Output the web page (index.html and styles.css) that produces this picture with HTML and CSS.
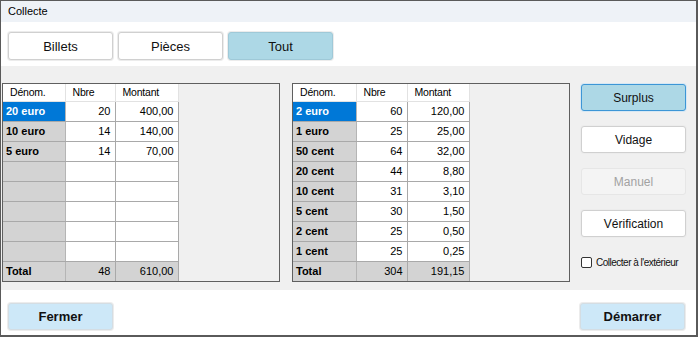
FILE: index.html
```html
<!DOCTYPE html>
<html lang="fr">
<head>
    <meta charset="UTF-8">
    <meta name="viewport" content="width=device-width, initial-scale=1.0">
    <title>Collecte</title>
    <link rel="stylesheet" href="styles.css">
</head>
<body>
    <div class="window">
        <div class="titlebar">Collecte</div>

        <div class="filtres">
            <button class="btn">Billets</button>
            <button class="btn">Pièces</button>
            <button class="btn actif">Tout</button>
        </div>

        <div class="main">
            <div class="grille">
                <table class="tab tab-billets">
                    <thead>
                        <tr><th>Dénom.</th><th>Nbre</th><th>Montant</th></tr>
                    </thead>
                    <tbody>
                        <tr class="sel"><td>20 euro</td><td>20</td><td>400,00</td></tr>
                        <tr><td>10 euro</td><td>14</td><td>140,00</td></tr>
                        <tr><td>5 euro</td><td>14</td><td>70,00</td></tr>
                        <tr><td></td><td></td><td></td></tr>
                        <tr><td></td><td></td><td></td></tr>
                        <tr><td></td><td></td><td></td></tr>
                        <tr><td></td><td></td><td></td></tr>
                        <tr><td></td><td></td><td></td></tr>
                        <tr class="total"><td>Total</td><td>48</td><td>610,00</td></tr>
                    </tbody>
                </table>
            </div>

            <div class="grille">
                <table class="tab tab-pieces">
                    <thead>
                        <tr><th>Dénom.</th><th>Nbre</th><th>Montant</th></tr>
                    </thead>
                    <tbody>
                        <tr class="sel"><td>2 euro</td><td>60</td><td>120,00</td></tr>
                        <tr><td>1 euro</td><td>25</td><td>25,00</td></tr>
                        <tr><td>50 cent</td><td>64</td><td>32,00</td></tr>
                        <tr><td>20 cent</td><td>44</td><td>8,80</td></tr>
                        <tr><td>10 cent</td><td>31</td><td>3,10</td></tr>
                        <tr><td>5 cent</td><td>30</td><td>1,50</td></tr>
                        <tr><td>2 cent</td><td>25</td><td>0,50</td></tr>
                        <tr><td>1 cent</td><td>25</td><td>0,25</td></tr>
                        <tr class="total"><td>Total</td><td>304</td><td>191,15</td></tr>
                    </tbody>
                </table>
            </div>

            <div class="actions">
                <button class="btn btn-side focus">Surplus</button>
                <button class="btn btn-side">Vidage</button>
                <button class="btn btn-side" disabled>Manuel</button>
                <button class="btn btn-side">Vérification</button>
                <label class="check"><span class="box"></span>Collecter à l'extérieur</label>
            </div>
        </div>

        <div class="footer">
            <button class="btn btn-bas">Fermer</button>
            <button class="btn btn-bas">Démarrer</button>
        </div>
    </div>
</body>
</html>
```

FILE: styles.css
```css
* {
    box-sizing: border-box;
}

body {
    margin: 0;
    font-family: "Liberation Sans", Arial, sans-serif;
    color: #000;
    background-color: #fff;
}

.window {
    width: 698px;
    height: 337px;
    border: 1px solid #5a5a5a;
    border-right-width: 2px;
    border-bottom-width: 2px;
    display: flex;
    flex-direction: column;
}

.titlebar {
    height: 21px;
    background-color: #eef2f7;
    font-size: 11px;
    padding: 4px 0 0 7px;
}

.filtres {
    height: 44px;
    background-color: #fff;
    display: flex;
    gap: 5px;
    padding: 10px 0 0 7px;
}

.btn {
    font-family: "Liberation Sans", Arial, sans-serif;
    font-size: 13px;
    color: #111;
    background-color: #fff;
    border: 1px solid #d0d0d0;
    border-radius: 3px;
    box-shadow: 0 0 0 1px #ececec;
    padding: 0;
}

.filtres .btn {
    width: 105px;
    height: 28px;
}

.filtres .actif {
    background-color: #add8e6;
    border-color: #9fc9d8;
}

.main {
    height: 224px;
    background-color: #f0f0f0;
    display: flex;
    padding: 17px 0 0 1px;
}

.grille {
    width: 278px;
    height: 199px;
    border: 1px solid #5f5f5f;
    background-color: #f0f0f0;
}

.grille + .grille {
    margin-left: 12px;
}

.tab {
    border-collapse: collapse;
    font-size: 11px;
}

.tab th,
.tab td {
    padding: 0 4px;
    border-right: 1px solid #a9a9a9;
    border-bottom: 1px solid #a9a9a9;
    white-space: nowrap;
}

.tab th {
    height: 17px;
    background-color: #fff;
    font-weight: normal;
    text-align: left;
    padding-left: 7px;
    border-right-color: #e2e2e2;
    border-bottom-color: #e2e2e2;
    font-size: 10.5px;
    letter-spacing: -0.2px;
}

.tab td {
    height: 20px;
    background-color: #fff;
    text-align: right;
}

.tab td:first-child {
    background-color: #d3d3d3;
    font-weight: bold;
    text-align: left;
    padding-left: 3px;
    border-right-color: #b5b5b5;
}

.tab .sel td:first-child {
    background-color: #0078d7;
    color: #fff;
}

.tab .total td {
    background-color: #d3d3d3;
    border-bottom: none;
}

.tab-billets th:nth-child(1) { width: 62px; }
.tab-billets th:nth-child(2) { width: 50px; }
.tab-billets th:nth-child(3) { width: 63px; }

.tab-pieces th:nth-child(1) { width: 63px; }
.tab-pieces th:nth-child(2) { width: 51px; }
.tab-pieces th:nth-child(3) { width: 62px; }

.actions {
    display: flex;
    flex-direction: column;
    margin-left: 11px;
    padding-top: 1px;
}

.btn-side {
    width: 105px;
    height: 27px;
    font-size: 12px;
    margin-bottom: 15px;
}

.btn-side.focus {
    background-color: #add8e6;
    border-color: #3d96d6;
    box-shadow: 0 0 0 1px #d7e8f4;
}

.btn-side:disabled {
    background-color: #f4f4f4;
    border-color: #e6e6e6;
    box-shadow: none;
    color: #a2a2a2;
}

.check {
    display: flex;
    align-items: center;
    font-size: 10px;
    letter-spacing: -0.5px;
    margin-top: 5px;
    color: #111;
}

.check .box {
    width: 11px;
    height: 11px;
    border: 1px solid #333;
    border-radius: 2px;
    background-color: #fff;
    margin-right: 4px;
}

.footer {
    flex: 1;
    background-color: #fff;
    display: flex;
    justify-content: space-between;
    padding: 13px 11px 0 7px;
}

.btn-bas {
    width: 105px;
    height: 27px;
    font-weight: bold;
    background-color: #cde8f8;
    border-color: #d4dde3;
}
```
